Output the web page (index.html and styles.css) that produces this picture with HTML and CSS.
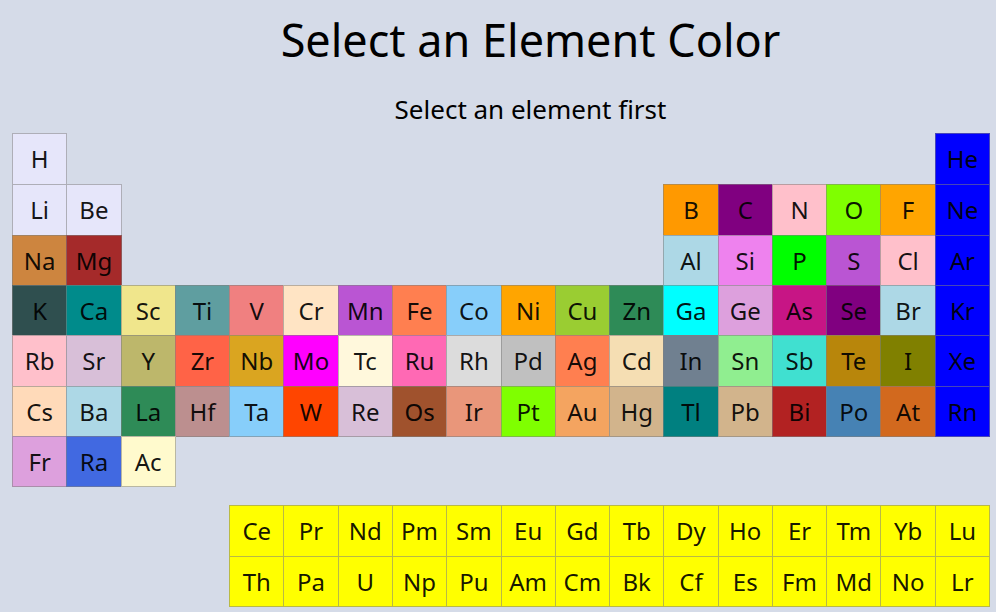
FILE: index.html
```
<!DOCTYPE html>
<html lang="en">
<head>
<meta charset="utf-8">
<title>Select an Element Color</title>
<link rel="stylesheet" href="styles.css">
</head>
<body>
<main class="picker">
<header class="heading">
<h1>Select an Element Color</h1>
<p>Select an element first</p>
</header>
<div class="elements">
<button class="lavender">H</button>
<button class="blue last">He</button>

<button class="lavender first">Li</button>
<button class="lavender">Be</button>
<button class="amber boron-group">B</button>
<button class="purple">C</button>
<button class="pink">N</button>
<button class="chartreuse">O</button>
<button class="orange">F</button>
<button class="blue">Ne</button>

<button class="peru first">Na</button>
<button class="brown">Mg</button>
<button class="lightblue boron-group">Al</button>
<button class="violet">Si</button>
<button class="lime">P</button>
<button class="mediumorchid">S</button>
<button class="pink">Cl</button>
<button class="blue">Ar</button>

<button class="darkslategray first">K</button>
<button class="darkcyan">Ca</button>
<button class="khaki">Sc</button>
<button class="cadetblue">Ti</button>
<button class="lightcoral">V</button>
<button class="bisque">Cr</button>
<button class="mediumorchid">Mn</button>
<button class="coral">Fe</button>
<button class="lightskyblue">Co</button>
<button class="orange">Ni</button>
<button class="yellowgreen">Cu</button>
<button class="seagreen">Zn</button>
<button class="aqua">Ga</button>
<button class="plum">Ge</button>
<button class="mediumvioletred">As</button>
<button class="purple">Se</button>
<button class="lightblue">Br</button>
<button class="blue">Kr</button>

<button class="pink first">Rb</button>
<button class="thistle">Sr</button>
<button class="darkkhaki">Y</button>
<button class="tomato">Zr</button>
<button class="goldenrod">Nb</button>
<button class="magenta">Mo</button>
<button class="cornsilk">Tc</button>
<button class="hotpink">Ru</button>
<button class="gainsboro">Rh</button>
<button class="silver">Pd</button>
<button class="coral">Ag</button>
<button class="wheat">Cd</button>
<button class="slategray">In</button>
<button class="lightgreen">Sn</button>
<button class="turquoise">Sb</button>
<button class="darkgoldenrod">Te</button>
<button class="olive">I</button>
<button class="blue">Xe</button>

<button class="peachpuff first">Cs</button>
<button class="lightblue">Ba</button>
<button class="seagreen">La</button>
<button class="rosybrown">Hf</button>
<button class="lightskyblue">Ta</button>
<button class="orangered">W</button>
<button class="thistle">Re</button>
<button class="sienna">Os</button>
<button class="darksalmon">Ir</button>
<button class="chartreuse">Pt</button>
<button class="sandybrown">Au</button>
<button class="tan">Hg</button>
<button class="teal">Tl</button>
<button class="tan">Pb</button>
<button class="firebrick">Bi</button>
<button class="steelblue">Po</button>
<button class="chocolate">At</button>
<button class="blue">Rn</button>

<button class="plum first">Fr</button>
<button class="royalblue">Ra</button>
<button class="lemonchiffon">Ac</button>
</div>

<div class="elements series">
<button class="yellow series-start">Ce</button>
<button class="yellow">Pr</button>
<button class="yellow">Nd</button>
<button class="yellow">Pm</button>
<button class="yellow">Sm</button>
<button class="yellow">Eu</button>
<button class="yellow">Gd</button>
<button class="yellow">Tb</button>
<button class="yellow">Dy</button>
<button class="yellow">Ho</button>
<button class="yellow">Er</button>
<button class="yellow">Tm</button>
<button class="yellow">Yb</button>
<button class="yellow">Lu</button>

<button class="yellow series-start">Th</button>
<button class="yellow">Pa</button>
<button class="yellow">U</button>
<button class="yellow">Np</button>
<button class="yellow">Pu</button>
<button class="yellow">Am</button>
<button class="yellow">Cm</button>
<button class="yellow">Bk</button>
<button class="yellow">Cf</button>
<button class="yellow">Es</button>
<button class="yellow">Fm</button>
<button class="yellow">Md</button>
<button class="yellow">No</button>
<button class="yellow">Lr</button>
</div>
</main>
</body>
</html>
```
FILE: styles.css
```
* { box-sizing: border-box; }

body {
  margin: 0;
  background: #d5dbe8;
  color: #000;
  font-family: "Noto Sans", "Open Sans", sans-serif;
}

.picker { padding: 8px 7px 4px 12px; }

.heading {
  padding-left: 60px;
  text-align: center;
}

h1 {
  margin: 0;
  font-size: 45px;
  font-weight: 400;
  line-height: 64px;
}

p {
  margin: 19px 0 6px;
  font-size: 26px;
  line-height: 36px;
}

.elements {
  display: grid;
  grid-template-columns: repeat(18, 1fr);
  grid-template-rows: 51px 51px 50px 50px 51px 50px 50px;
}

.series {
  grid-template-rows: 51px 50px;
  margin-top: 19px;
}

/* Each cell reaches over the next one's edge, so neighbours share a line. */
button {
  min-width: 0;
  margin: 0 -1px -1px 0;
  padding: 0;
  border: 1px solid rgba(128, 128, 128, 0.55);
  color: rgba(0, 0, 0, 0.92);
  font: 24px/48px "Noto Sans", "Open Sans", sans-serif;
  text-align: center;
  white-space: nowrap;
}

.first { grid-column-start: 1; }
.boron-group { grid-column-start: 13; }
.last { grid-column-start: 18; }
.series-start { grid-column-start: 5; }

.lavender { background: lavender; }
.blue { background: blue; }
.amber { background: #ff9900; }
.purple { background: purple; }
.pink { background: pink; }
.chartreuse { background: chartreuse; }
.orange { background: orange; }
.peru { background: peru; }
.brown { background: brown; }
.lightblue { background: lightblue; }
.violet { background: violet; }
.lime { background: lime; }
.mediumorchid { background: mediumorchid; }
.darkslategray { background: darkslategray; }
.darkcyan { background: darkcyan; }
.khaki { background: khaki; }
.cadetblue { background: cadetblue; }
.lightcoral { background: lightcoral; }
.bisque { background: bisque; }
.coral { background: coral; }
.lightskyblue { background: lightskyblue; }
.yellowgreen { background: yellowgreen; }
.seagreen { background: seagreen; }
.aqua { background: aqua; }
.plum { background: plum; }
.mediumvioletred { background: mediumvioletred; }
.thistle { background: thistle; }
.darkkhaki { background: darkkhaki; }
.tomato { background: tomato; }
.goldenrod { background: goldenrod; }
.magenta { background: magenta; }
.cornsilk { background: cornsilk; }
.hotpink { background: hotpink; }
.gainsboro { background: gainsboro; }
.silver { background: silver; }
.wheat { background: wheat; }
.slategray { background: slategray; }
.lightgreen { background: lightgreen; }
.turquoise { background: turquoise; }
.darkgoldenrod { background: darkgoldenrod; }
.olive { background: olive; }
.peachpuff { background: peachpuff; }
.rosybrown { background: rosybrown; }
.orangered { background: orangered; }
.sienna { background: sienna; }
.darksalmon { background: darksalmon; }
.sandybrown { background: sandybrown; }
.tan { background: tan; }
.teal { background: teal; }
.firebrick { background: firebrick; }
.steelblue { background: steelblue; }
.chocolate { background: chocolate; }
.royalblue { background: royalblue; }
.lemonchiffon { background: lemonchiffon; }
.yellow { background: yellow; }
```
